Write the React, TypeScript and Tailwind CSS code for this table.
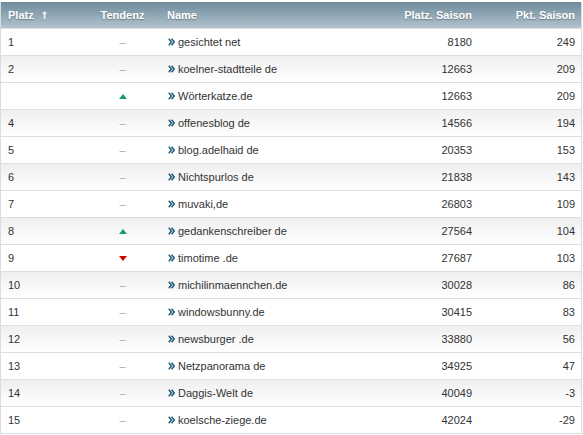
const rows: { platz: string; trend: 'same' | 'up' | 'down'; name: string; saison: number; pkt: number }[] = [
  { platz: '1', trend: 'same', name: 'gesichtet net', saison: 8180, pkt: 249 },
  { platz: '2', trend: 'same', name: 'koelner-stadtteile de', saison: 12663, pkt: 209 },
  { platz: '', trend: 'up', name: 'Wörterkatze.de', saison: 12663, pkt: 209 },
  { platz: '4', trend: 'same', name: 'offenesblog de', saison: 14566, pkt: 194 },
  { platz: '5', trend: 'same', name: 'blog.adelhaid de', saison: 20353, pkt: 153 },
  { platz: '6', trend: 'same', name: 'Nichtspurlos de', saison: 21838, pkt: 143 },
  { platz: '7', trend: 'same', name: 'muvaki,de', saison: 26803, pkt: 109 },
  { platz: '8', trend: 'up', name: 'gedankenschreiber de', saison: 27564, pkt: 104 },
  { platz: '9', trend: 'down', name: 'timotime .de', saison: 27687, pkt: 103 },
  { platz: '10', trend: 'same', name: 'michilinmaennchen.de', saison: 30028, pkt: 86 },
  { platz: '11', trend: 'same', name: 'windowsbunny.de', saison: 30415, pkt: 83 },
  { platz: '12', trend: 'same', name: 'newsburger .de', saison: 33880, pkt: 56 },
  { platz: '13', trend: 'same', name: 'Netzpanorama de', saison: 34925, pkt: 47 },
  { platz: '14', trend: 'same', name: 'Daggis-Welt de', saison: 40049, pkt: -3 },
  { platz: '15', trend: 'same', name: 'koelsche-ziege.de', saison: 42024, pkt: -29 },
]

function Trend({ trend }: { trend: 'same' | 'up' | 'down' }) {
  if (trend === 'up')
    return (
      <svg width="8" height="5" viewBox="0 0 8 5">
        <polygon points="4,0 8,5 0,5" fill="#1f9a6a" />
      </svg>
    )
  if (trend === 'down')
    return (
      <svg width="8" height="5" viewBox="0 0 8 5">
        <polygon points="0,0 8,0 4,5" fill="#d40000" />
      </svg>
    )
  return <span className="text-[#aaa]">–</span>
}

function Chevrons() {
  return (
    <svg width="7" height="8" viewBox="0 0 7 8" className="shrink-0">
      <path d="M0.8 0.8 L3.4 4 L0.8 7.2 M3.6 0.8 L6.2 4 L3.6 7.2" fill="none" stroke="#1b5a7a" strokeWidth="1.5" />
    </svg>
  )
}

export default function App() {
  return (
    <div className="w-[583px] h-[435px] bg-white pt-[2px] pr-[1px] pb-[2px]" style={{ fontFamily: '"Liberation Sans", Arial, sans-serif' }}>
      <div className="border-l border-r border-b border-[#dcdcdc]">
        <div className="flex h-[26px] items-center bg-gradient-to-b from-[#6f8b9c] to-[#b2c3cd] text-[11px] font-bold text-white [text-shadow:0_1px_1px_rgba(0,0,0,0.3)]">
          <div className="w-[82px] pl-[7px] flex items-center gap-[8px]">
            <span>Platz</span>
            <svg width="5" height="8" viewBox="0 0 5 8">
              <path d="M2.5 0 L5 3 L3.4 3 L3.4 8 L1.6 8 L1.6 3 L0 3 Z" fill="#e8eef2" />
            </svg>
          </div>
          <div className="w-[79px] text-center">Tendenz</div>
          <div className="w-[150px] pl-[5px]">Name</div>
          <div className="w-[160px] text-right">Platz. Saison</div>
          <div className="flex-1 text-right pr-[6px]">Pkt. Saison</div>
        </div>
        {rows.map((r, i) => (
          <div
            key={i}
            className={
              'flex h-[27px] items-center text-[11px] text-[#333] border-t border-[#dedede] ' +
              (i % 2 === 1 ? 'bg-gradient-to-b from-[#efefef] to-white' : 'bg-white')
            }
          >
            <div className="w-[82px] pl-[7px]">{r.platz}</div>
            <div className="w-[79px] flex justify-center items-center">
              <Trend trend={r.trend} />
            </div>
            <div className="w-[150px] pl-[6px] flex items-center gap-[3px]">
              <Chevrons />
              <span>{r.name}</span>
            </div>
            <div className="w-[160px] text-right">{r.saison}</div>
            <div className="flex-1 text-right pr-[6px]">{r.pkt}</div>
          </div>
        ))}
      </div>
    </div>
  )
}
